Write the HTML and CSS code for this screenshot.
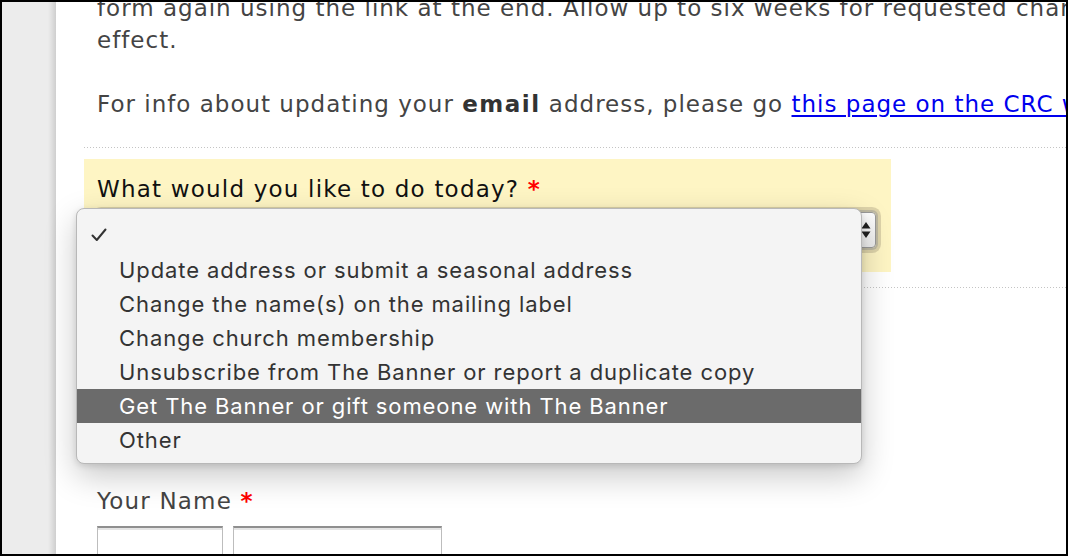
FILE: index.html
```html
<!DOCTYPE html>
<html>
<head>
<meta charset="utf-8">
<link rel="stylesheet" href="styles.css">
</head>
<body>
<div class="frame">
  <aside class="rail"></aside>
  <main class="content">
    <p class="para first">form again using the link at the end. Allow up to six weeks for requested changes to take<br>effect.</p>
    <p class="para">For info about updating your <b>email</b> address, please go <a href="#">this page on the CRC website</a>.</p>
    <div class="rule"></div>
    <div class="field highlight">
      <div class="label dark">What would you like to do today? <span class="req">*</span></div>
      <div class="select">
        <svg class="updown" width="10" height="18" viewBox="0 0 10 18"><path d="M5 1 L9.5 7.5 H0.5 Z M5 17 L9.5 10.5 H0.5 Z" fill="#222"/></svg>
      </div>
    </div>
    <div class="rule"></div>
    <div class="field plain">
      <div class="label">Your Name <span class="req">*</span></div>
      <div class="inputs">
        <div class="input first-name"></div>
        <div class="input last-name"></div>
      </div>
    </div>
  </main>
  <div class="popup">
    <div class="opt checked"><svg class="check" width="16" height="14" viewBox="0 0 16 14"><path d="M1.5 7.5 L5.8 12 L14.5 1.5" fill="none" stroke="#333" stroke-width="2" stroke-linecap="round" stroke-linejoin="round"/></svg></div>
    <div class="opt">Update address or submit a seasonal address</div>
    <div class="opt">Change the name(s) on the mailing label</div>
    <div class="opt">Change church membership</div>
    <div class="opt">Unsubscribe from The Banner or report a duplicate copy</div>
    <div class="opt active">Get The Banner or gift someone with The Banner</div>
    <div class="opt">Other</div>
  </div>
</div>
</body>
</html>
```

FILE: styles.css
```css
html, body {
  margin: 0;
  padding: 0;
  background: #fff;
}

.frame {
  position: relative;
  box-sizing: border-box;
  width: 1068px;
  height: 556px;
  border: 2px solid #000;
  display: flex;
  overflow: hidden;
  background: #fff;
}

.rail {
  flex: 0 0 54px;
  background: linear-gradient(to right, #ececec 0, #ececec 46px, #e2e2e2 49px, #d2d2d2 53px, #cfcfcf 54px);
}

.content {
  flex: 1 0 auto;
  padding-left: 28px;
  font-family: "DejaVu Sans", Verdana, sans-serif;
  font-size: 23px;
  line-height: 32px;
  color: #444;
  white-space: nowrap;
}

.para {
  margin: 0 0 32px 13px;
  letter-spacing: 1px;
}

.para.first {
  margin-top: -10px;
}

.para b {
  color: #333;
  letter-spacing: 1.5px;
}

.para a {
  color: #0000ee;
  text-decoration: underline;
  text-underline-offset: 3px;
}

.para:last-of-type {
  margin-bottom: 27px;
}

.rule {
  height: 1px;
  background-image: repeating-linear-gradient(to right, #c4c4c4 0, #c4c4c4 1px, transparent 1px, transparent 3px);
}

.field {
  padding: 0 13px;
}

.highlight {
  width: 781px;
  margin: 11px 0 15px;
  padding-top: 14px;
  padding-bottom: 24px;
  background: #fef5c4;
}

.label {
  color: #444;
  letter-spacing: 1.2px;
}

.label.dark {
  color: #111;
}

.req {
  color: #f00;
  font-weight: bold;
  letter-spacing: 0;
}

.select {
  margin-top: 7px;
  height: 36px;
  width: 779px;
  box-sizing: border-box;
  border: 1px solid #9a9a9a;
  border-radius: 4px;
  background: linear-gradient(#fdfdfd, #ececec);
  box-shadow: 0 0 0 2px rgba(150, 150, 150, 0.45), 0 0 0 5px rgba(160, 150, 120, 0.35);
  display: flex;
  justify-content: flex-end;
  align-items: center;
  padding-right: 4px;
}

.updown {
  display: block;
}

.plain {
  padding-top: 197px;
}

.inputs {
  display: flex;
  gap: 10px;
  margin-top: 9px;
}

.input {
  height: 40px;
  box-sizing: border-box;
  border: 1px solid #bdbdbd;
  border-top: 2px solid #8f8f8f;
  box-shadow: inset 0 2px 0 #e4e4e4;
  background: #fff;
}

.first-name {
  width: 126px;
}

.last-name {
  width: 209px;
}

/* Native dropdown popup (overlays the form) */
.popup {
  position: absolute;
  left: 74px;
  top: 206px;
  width: 786px;
  height: 256px;
  box-sizing: border-box;
  padding-top: 10px;
  background: #f4f4f4;
  border: 1px solid #b8b8b8;
  border-radius: 8px;
  box-shadow: 0 12px 32px rgba(0, 0, 0, 0.22), 0 2px 6px rgba(0, 0, 0, 0.12);
  font-family: Inter, "Helvetica Neue", Arial, sans-serif;
  font-size: 22px;
  letter-spacing: 0.9px;
  color: #333;
}

.opt {
  height: 34px;
  line-height: 34px;
  padding-left: 42px;
}

.opt.checked {
  position: relative;
}

.check {
  position: absolute;
  left: 14px;
  top: 9px;
}

.opt.active {
  background: #6b6b6b;
  color: #fff;
}
```
